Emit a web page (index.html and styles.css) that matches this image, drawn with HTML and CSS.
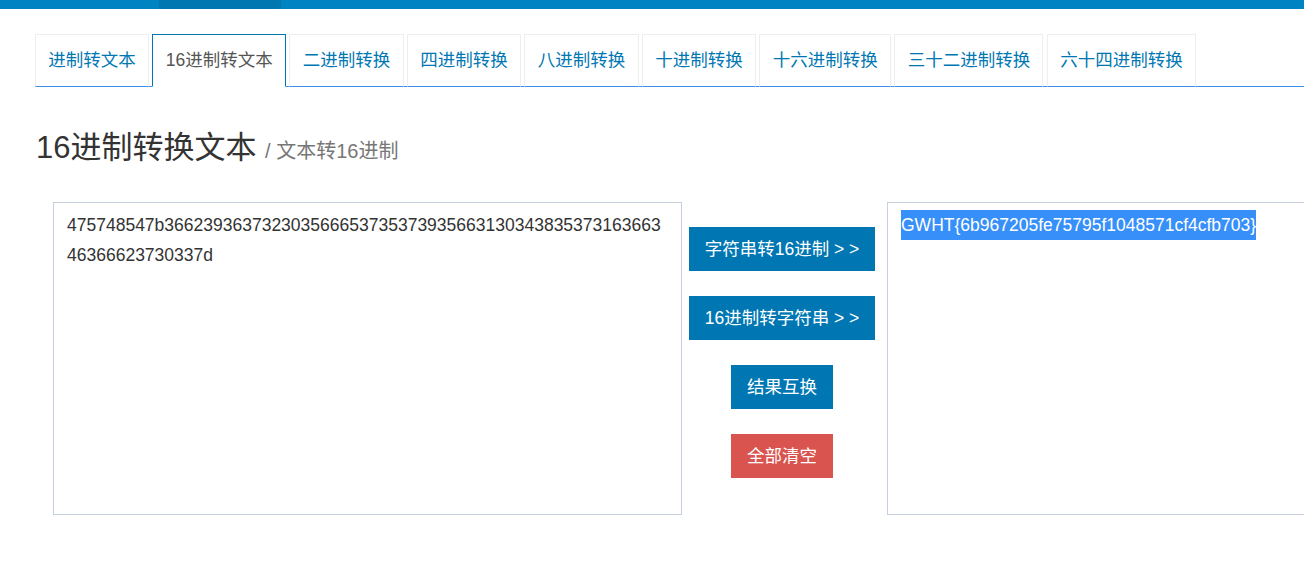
FILE: index.html
```html
<!DOCTYPE html>
<html lang="zh-CN">
<head>
<meta charset="utf-8">
<title>16进制转换文本</title>
<link rel="stylesheet" href="styles.css">
</head>
<body>
<div class="topbar"><div class="topbar-active"></div></div>
<div class="container">
  <ul class="tabs">
    <li class="tab"><a href="#">进制转文本</a></li>
    <li class="tab active"><a href="#">16进制转文本</a></li>
    <li class="tab"><a href="#">二进制转换</a></li>
    <li class="tab"><a href="#">四进制转换</a></li>
    <li class="tab"><a href="#">八进制转换</a></li>
    <li class="tab"><a href="#">十进制转换</a></li>
    <li class="tab"><a href="#">十六进制转换</a></li>
    <li class="tab"><a href="#">三十二进制转换</a></li>
    <li class="tab"><a href="#">六十四进制转换</a></li>
  </ul>
  <h3 class="title">16进制转换文本 <small class="subtitle">/ 文本转16进制</small></h3>
  <div class="workspace">
    <div class="box box-left">475748547b366239363732303566653735373935663130343835373163663<br>46366623730337d</div>
    <div class="actions">
      <button class="btn btn-blue">字符串转16进制 &gt; &gt;</button>
      <button class="btn btn-blue">16进制转字符串 &gt; &gt;</button>
      <button class="btn btn-blue">结果互换</button>
      <button class="btn btn-red">全部清空</button>
    </div>
    <div class="box box-right"><span class="selected">GWHT{6b967205fe75795f1048571cf4cfb703}</span></div>
  </div>
</div>
</body>
</html>
```
FILE: styles.css
```css
html, body {
  margin: 0;
  padding: 0;
  background: #fff;
  overflow: hidden;
}
body {
  font-family: "Liberation Sans", "Noto Sans CJK SC", sans-serif;
  font-size: 17.5px;
  color: #333;
  width: 1304px;
}
.topbar {
  height: 9px;
  background: #0083c2;
  display: flex;
}
.topbar-active {
  margin-left: 159px;
  width: 122px;
  background: #0077b1;
}
.container {
  padding: 25px 0 0 35px;
  width: 1600px;
}
.tabs {
  list-style: none;
  margin: 0;
  padding: 0;
  display: flex;
  gap: 3.4px;
  border-bottom: 1px solid #3d8ee8;
  width: 1269px;
}
.tab {
  margin-bottom: -1px;
}
.tab a {
  display: block;
  height: 51px;
  line-height: 51px;
  padding: 0 12.3px;
  border: 1px solid #eee;
  border-bottom-color: transparent;
  color: #0077b3;
  text-decoration: none;
  white-space: nowrap;
}
.tab.active a {
  border-color: #0077b3;
  border-bottom-color: #fff;
  background: #fff;
  color: #555;
}
.title {
  margin: 44px 0 0 1px;
  font-size: 31px;
  font-weight: normal;
  line-height: 34px;
  color: #333;
}
.subtitle {
  font-size: 20px;
  color: #777;
}
.workspace {
  display: flex;
  align-items: flex-start;
  margin-top: 34px;
  padding-left: 18px;
}
.box {
  box-sizing: border-box;
  width: 629px;
  height: 313px;
  border: 1px solid #c6cfdf;
  padding: 7px 13px;
  line-height: 30px;
  font-size: 17.5px;
  color: #333;
  flex-shrink: 0;
}
.actions {
  width: 205px;
  box-sizing: border-box;
  padding: 25px 5px 0 0;
  display: flex;
  flex-direction: column;
  align-items: center;
  gap: 25px;
}
.btn {
  font-family: "Liberation Sans", "Noto Sans CJK SC", sans-serif;
  font-size: 17.5px;
  line-height: 25px;
  padding: 8.5px 15px;
  border: 1px solid transparent;
  color: #fff;
  border-radius: 0;
  white-space: nowrap;
}
.btn-blue {
  background: #0077b3;
  border-color: #0077b3;
}
.btn-red {
  background: #d9534f;
  border-color: #d9534f;
}
.selected {
  display: inline-block;
  line-height: 30px;
  background: #3790fa;
  color: #fff;
}
```
